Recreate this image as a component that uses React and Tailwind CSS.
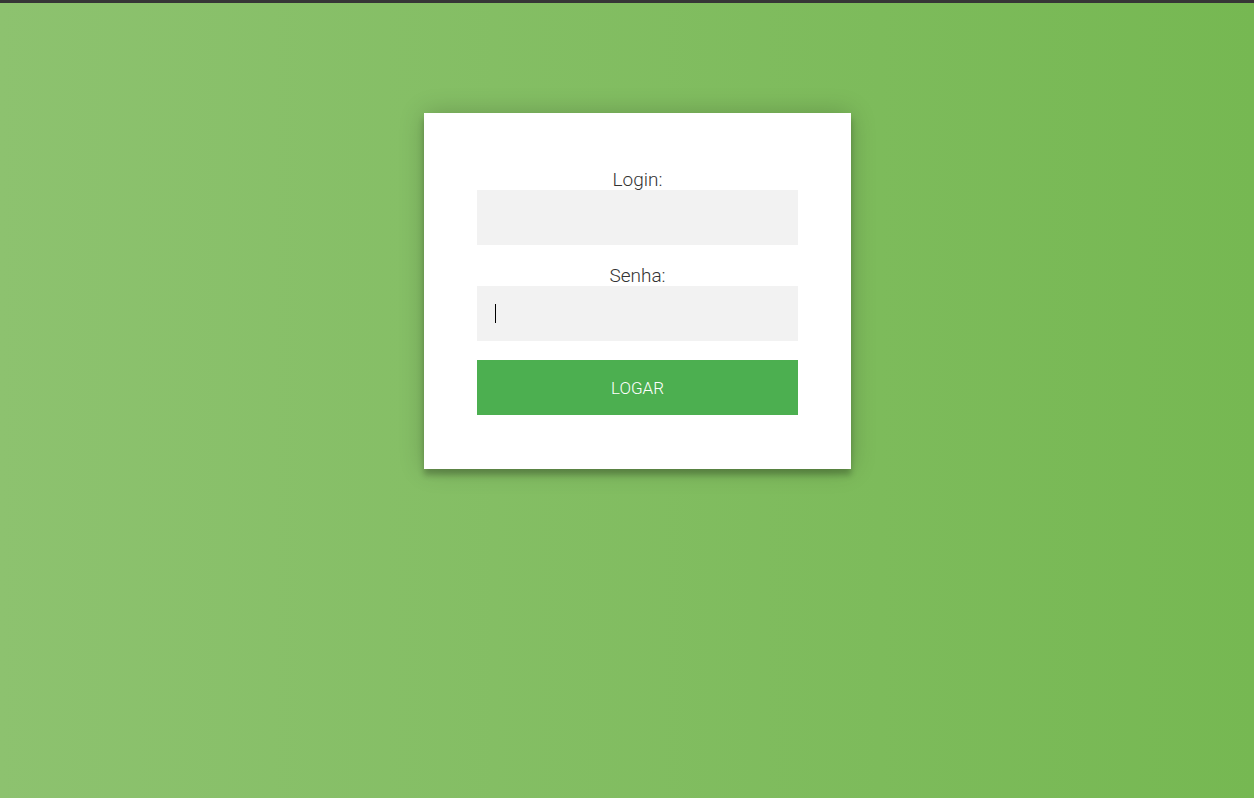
export default function App() {
    return (
        <div className="min-h-screen w-full flex flex-col bg-gradient-to-r from-[#8DC26F] to-[#76B852] font-['Roboto',sans-serif]">
            {/* dunkle Leiste oben */}
            <div className="h-[3px] w-full bg-[#363636]" />

            <div className="flex justify-center pl-[21px] pt-[110px]">
                <form
                    className="w-[427px] bg-white px-[53px] pt-[56px] pb-[54px] flex flex-col shadow-[0_0_24px_0_rgba(0,0,0,0.2),0_6px_6px_0_rgba(0,0,0,0.24)]"
                    onSubmit={(e) => e.preventDefault()}
                >
                    <label className="text-center text-[19px] leading-[21px] font-light text-[#333]">Login:</label>
                    <input
                        type="text"
                        className="h-[55px] w-full bg-[#f2f2f2] outline-none px-[18px] text-[16px]"
                    />

                    <label className="mt-[20px] text-center text-[19px] leading-[21px] font-light text-[#333]">Senha:</label>
                    <div className="relative">
                        <input
                            type="password"
                            className="h-[55px] w-full bg-[#f2f2f2] outline-none px-[18px] text-[16px]"
                        />
                        <span className="absolute left-[18px] top-[18px] h-[19px] w-px bg-black" />
                    </div>

                    <button
                        type="submit"
                        className="mt-[19px] h-[55px] w-full bg-[#4CAF50] text-white uppercase text-[17px] font-light pt-[2px]"
                    >
                        Logar
                    </button>
                </form>
            </div>
        </div>
    );
}
